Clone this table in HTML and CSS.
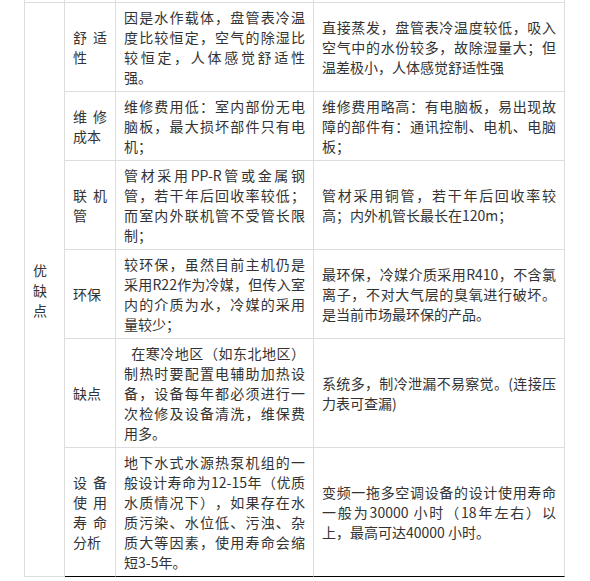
FILE: index.html
```html
<!DOCTYPE html>
<html lang="zh-CN">
<head>
<meta charset="utf-8">
<title>优缺点对比</title>
<link rel="stylesheet" href="styles.css">
</head>
<body>
<div class="page">
  <table class="compare">
    <colgroup>
      <col class="c1">
      <col class="c2">
      <col class="c3">
      <col class="c4">
    </colgroup>
    <tbody>
      <tr class="cut">
        <td></td><td></td><td></td><td></td>
      </tr>
      <tr>
        <td class="group" rowspan="6">优缺点</td>
        <td class="label">舒适性</td>
        <td>因是水作载体，盘管表冷温度比较恒定，空气的除湿比较恒定，人体感觉舒适性强。</td>
        <td>直接蒸发，盘管表冷温度较低，吸入空气中的水份较多，故除湿量大；但温差极小，人体感觉舒适性强</td>
      </tr>
      <tr>
        <td class="label">维修成本</td>
        <td>维修费用低：室内部份无电脑板，最大损坏部件只有电机；</td>
        <td>维修费用略高：有电脑板，易出现故障的部件有：通讯控制、电机、电脑板；</td>
      </tr>
      <tr>
        <td class="label">联机管</td>
        <td>管材采用PP-R管或金属钢管，若干年后回收率较低；而室内外联机管不受管长限制；</td>
        <td>管材采用铜管，若干年后回收率较高；内外机管长最长在120m；</td>
      </tr>
      <tr>
        <td class="label">环保</td>
        <td>较环保，虽然目前主机仍是采用R22作为冷媒，但传入室内的介质为水，冷媒的采用量较少；</td>
        <td>最环保，冷媒介质采用R410，不含氯离子，不对大气层的臭氧进行破坏。是当前市场最环保的产品。</td>
      </tr>
      <tr>
        <td class="label">缺点</td>
        <td>&nbsp;&nbsp;在寒冷地区（如东北地区）制热时要配置电辅助加热设备，设备每年都必须进行一次检修及设备清洗，维保费用多。</td>
        <td>系统多，制冷泄漏不易察觉。(连接压力表可查漏)</td>
      </tr>
      <tr class="last">
        <td class="label">设备使用寿命分析</td>
        <td>地下水式水源热泵机组的一般设计寿命为12-15年（优质水质情况下），如果存在水质污染、水位低、污浊、杂质大等因素，使用寿命会缩短3-5年。</td>
        <td>变频一拖多空调设备的设计使用寿命一般为30000 小时（18年左右）以上，最高可达40000 小时。</td>
      </tr>
    </tbody>
  </table>
</div>
</body>
</html>
```

FILE: styles.css
```css
html, body {
  margin: 0;
  padding: 0;
  background: #ffffff;
}

.page {
  padding-left: 24px;
}

.compare {
  table-layout: fixed;
  width: 541px;
  border-collapse: separate;
  border-spacing: 0;
  border-left: 1px solid #dddddd;
  font-family: "Noto Sans CJK SC", "Noto Sans", sans-serif;
  font-size: 14px;
  line-height: 20px;
  color: #333333;
  text-spacing-trim: space-all;
}

.c1 { width: 40px; }
.c2 { width: 51px; }
.c3 { width: 198px; }
.c4 { width: 251px; }

.compare td {
  box-sizing: border-box;
  padding: 4px 8px;
  border-right: 1px solid #dddddd;
  border-bottom: 1px solid #dddddd;
  vertical-align: middle;
  text-align: justify;
  word-break: normal;
}

.compare .cut td {
  height: 3px;
  padding: 0;
  line-height: 0;
  font-size: 0;
}

.compare .last td {
  border-bottom-color: #000000;
}
```
